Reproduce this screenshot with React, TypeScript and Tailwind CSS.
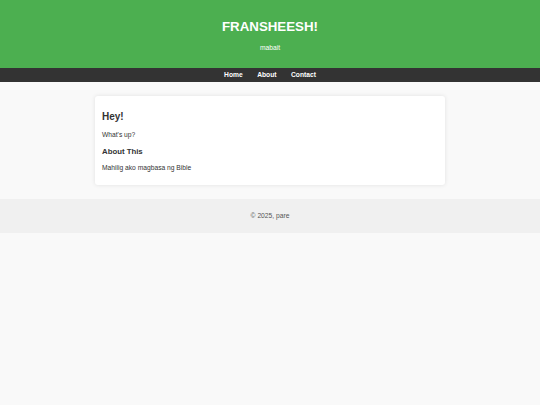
export default function App() {
  return (
    <div className="min-h-[405px] bg-[#f9f9f9] text-[#333]" style={{ fontFamily: '"Liberation Sans", Arial, sans-serif' }}>
      <header className="h-[68px] bg-[#4caf50] text-white flex flex-col items-center pt-[20px]">
        <h1 className="text-[13.3px] font-bold leading-none">FRANSHEESH!</h1>
        <p className="text-[6.7px] leading-none mt-[12px]">mabait</p>
      </header>
      <nav className="h-[14px] bg-[#333] flex items-center justify-center gap-[14.5px]">
        <a className="text-white text-[6.7px] font-bold leading-none">Home</a>
        <a className="text-white text-[6.7px] font-bold leading-none">About</a>
        <a className="text-white text-[6.7px] font-bold leading-none">Contact</a>
      </nav>
      <main className="pt-[14px] pb-[14px]">
        <div className="w-[350px] mx-auto bg-white rounded-[3px] shadow-[0_0_4px_rgba(0,0,0,0.1)] px-[7px] pt-[16px] pb-[14px]">
          <h2 className="text-[10px] font-bold leading-none">Hey!</h2>
          <p className="text-[6.7px] leading-none mt-[10px]">What's up?</p>
          <h3 className="text-[7.8px] font-bold leading-none mt-[9px]">About This</h3>
          <p className="text-[6.7px] leading-none mt-[9px]">Mahilig ako magbasa ng Bible</p>
        </div>
      </main>
      <footer className="h-[34px] bg-[#f0f0f0] flex items-center justify-center">
        <p className="text-[6.7px] leading-none text-[#555]">© 2025, pare</p>
      </footer>
    </div>
  );
}
